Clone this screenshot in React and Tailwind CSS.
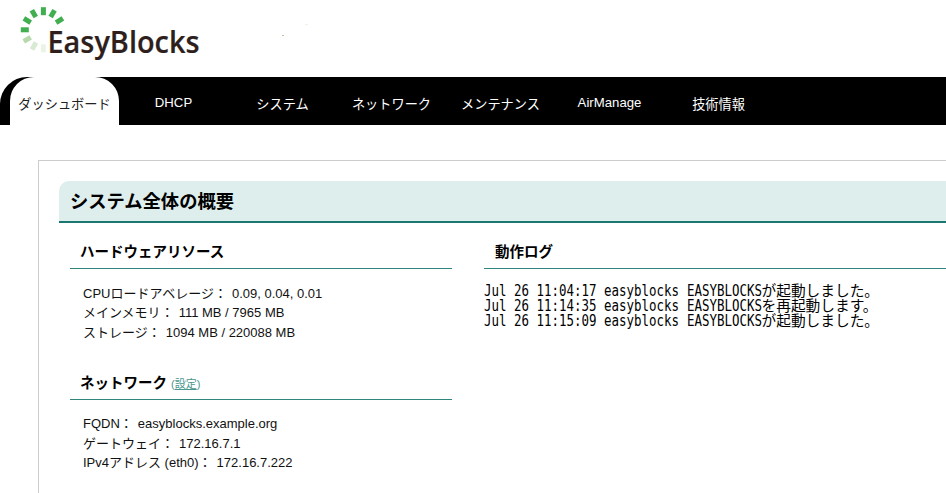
import React from "react";

// Centre x, centre y, rotation and colour of each block in the ring.
const blocks = [
  [24.8, 29.8, 0, "#41ae4f"],
  [27.3, 20.4, 32, "#41ae4f"],
  [33.8, 13.6, 60, "#41ae4f"],
  [43.4, 11.2, 90, "#41ae4f"],
  [52.6, 13.6, 120, "#41ae4f"],
  [59.5, 20.5, 148, "#41ae4f"],
  [27.2, 39.3, -30, "#b7d9ae"],
  [34, 46, -60, "#d9ead4"],
  [43.4, 48.3, 90, "#e9f4e7"],
];

function Logo() {
  return (
    <svg width="320" height="77" viewBox="0 0 320 77" className="block">
      {blocks.map(([x, y, r, fill]) => (
        <rect
          key={`${x}-${y}`}
          x={x - 4}
          y={y - 2.5}
          width="8"
          height="5"
          fill={fill}
          transform={`rotate(${r} ${x} ${y})`}
        />
      ))}
      <text
        x="47.5"
        y="52.7"
        textLength="152"
        lengthAdjust="spacingAndGlyphs"
        className="fill-[#2e1f1d] stroke-[#2e1f1d] stroke-[0.2] font-['Open_Sans','Noto_Sans',sans-serif] text-[31px] font-semibold"
      >
        EasyBlocks
      </text>
      <path d="M282 35.5h2" stroke="#b8c8a0" />
      <path d="M305 24.5h3" stroke="#eef4e4" />
    </svg>
  );
}

const nav = [
  ["DHCP", "pt-[3px]"],
  ["システム", "pt-[7px]"],
  ["ネットワーク", "pt-[7px]"],
  ["メンテナンス", "pt-[7px]"],
  ["AirManage", "pt-[3px]"],
  ["技術情報", "pt-[7px]"],
];

function Heading({ children, className = "" }) {
  return (
    <h2 className={`flex h-[34px] items-center border-b border-[#2f857c] text-[14.5px] font-bold leading-[20px] text-black ${className}`}>
      {children}
    </h2>
  );
}

function Field({ label, value }) {
  return (
    <div className="whitespace-nowrap">
      {label}：<span className="ml-[5px]">{value}</span>
    </div>
  );
}

function LogLine({ stamp, message }) {
  return (
    <div className="flex h-[15.4px] items-center whitespace-pre leading-[15px] text-black">
      <span className="w-[202.5px] shrink-0">
        <span className="inline-block origin-left scale-x-[0.8305] font-['DejaVu_Sans_Mono',monospace] text-[15px]">{`${stamp} easyblocks`}</span>
      </span>
      <span className="w-[75px] shrink-0">
        <span className="inline-block origin-left scale-x-[0.8305] font-['DejaVu_Sans_Mono',monospace] text-[15px]">EASYBLOCKS</span>
      </span>
      <span className="text-[14.7px]">{message}</span>
    </div>
  );
}

export default function App() {
  return (
    <div className="h-[493px] w-[946px] overflow-hidden bg-white font-['Liberation_Sans','Noto_Sans_CJK_JP',sans-serif] text-[13px] text-[#111]">
      <header className="h-[77px]">
        <Logo />
      </header>
      <nav className="flex h-[48px] rounded-tl-[27px] bg-black pl-[10px] text-white">
        <a className="flex w-[109px] items-center justify-center whitespace-nowrap rounded-t-[24px] bg-white pt-[7px] text-[13.2px] text-[#222]">
          ダッシュボード
        </a>
        {nav.map(([label, cls]) => (
          <a key={label} className={`flex w-[109px] items-center justify-center whitespace-nowrap text-[13.2px] ${cls}`}>
            {label}
          </a>
        ))}
      </nav>
      <main className="ml-[38px] mt-[35px] h-[340px] border-l border-t border-[#cccccc] pl-5 pt-5">
        <h1 className="flex h-[42px] items-center rounded-tl-[10px] border-b-2 border-[#1a7870] bg-[#deeeec] pl-[11px] pt-px text-[18.3px] font-bold text-black">
          システム全体の概要
        </h1>
        <div className="flex pl-[11px] pt-3">
          <section className="w-[382px] shrink-0">
            <Heading className="pl-[10px]">ハードウェアリソース</Heading>
            <div className="pl-[13px] pt-[14.5px] leading-[19.5px]">
              <Field label="CPUロードアベレージ" value="0.09, 0.04, 0.01" />
              <Field label="メインメモリ" value="111 MB / 7965 MB" />
              <Field label="ストレージ" value="1094 MB / 220088 MB" />
            </div>
            <Heading className="mt-[24px] pl-[10px]">
              ネットワーク
              <span className="ml-1 pt-[2px] text-[11px] font-normal text-[#4b968e]">
                (<a className="underline">設定</a>)
              </span>
            </Heading>
            <div className="pl-[13px] pt-[14px] leading-[19.5px]">
              <Field label="FQDN" value="easyblocks.example.org" />
              <Field label="ゲートウェイ" value="172.16.7.1" />
              <Field label="IPv4アドレス (eth0)" value="172.16.7.222" />
            </div>
          </section>
          <section className="ml-8 grow">
            <Heading className="pl-[11px]">動作ログ</Heading>
            <div className="pt-[14.5px]">
              <LogLine stamp="Jul 26 11:04:17" message="が起動しました。" />
              <LogLine stamp="Jul 26 11:14:35" message="を再起動します。" />
              <LogLine stamp="Jul 26 11:15:09" message="が起動しました。" />
            </div>
          </section>
        </div>
      </main>
    </div>
  );
}
